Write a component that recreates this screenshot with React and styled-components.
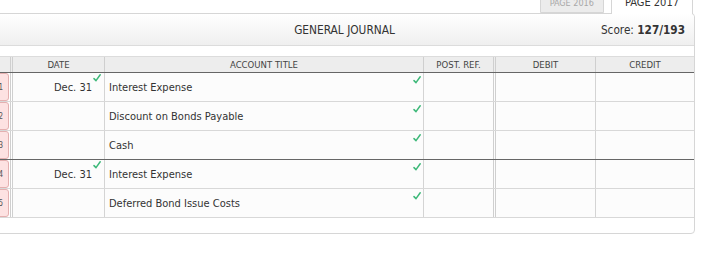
import React from "react";
import styled, { createGlobalStyle } from "styled-components";

const Global = createGlobalStyle`
  html, body { margin: 0; padding: 0; background: #fff; }
  body {
    font-family: "DejaVu Sans Condensed", "Liberation Sans", sans-serif;
    color: #333;
    overflow: hidden;
  }
  * { box-sizing: border-box; }
`;

const Page = styled.div`
  width: 708px;
  height: 253px;
  overflow: hidden;
`;

const Tabs = styled.div`
  display: flex;
  justify-content: flex-end;
  align-items: flex-end;
  gap: 7px;
  padding-right: 15px;
  margin-top: -8px;
  height: 21px;
  position: relative;
  z-index: 2;
`;

const Tab = styled.div`
  display: flex;
  align-items: flex-end;
  justify-content: center;
  height: ${p => (p.$active ? 22 : 20)}px;
  margin-bottom: ${p => (p.$active ? -1 : 0)}px;
  padding: 0 ${p => (p.$active ? 13 : 9)}px ${p => (p.$active ? 6 : 4)}px;
  border: 1px solid #d6d6d6;
  border-bottom: ${p => (p.$active ? "none" : "1px solid #d6d6d6")};
  border-radius: 3px 3px 0 0;
  background: ${p => (p.$active ? "#fff" : "#ececec")};
  color: ${p => (p.$active ? "#333" : "#a8a8a8")};
  font-size: ${p => (p.$active ? 11 : 9)}px;
  line-height: 1;
  text-transform: uppercase;
`;

const Panel = styled.div`
  margin-left: -6px;
  width: 701px;
  border: 1px solid #d6d6d6;
  border-radius: 0 4px 4px 0;
  background: #fff;
  padding-bottom: 15px;
`;

const Header = styled.div`
  display: grid;
  grid-template-columns: 1fr auto 1fr;
  align-items: center;
  height: 32px;
  border-bottom: 1px solid #dcdcdc;
  background: linear-gradient(#ffffff, #efefef);
  border-radius: 0 4px 0 0;
  margin-bottom: 10px;
`;

const Title = styled.div`
  grid-column: 2;
  font-size: 11.8px;
  color: #333;
  text-transform: uppercase;
`;

const Score = styled.div`
  grid-column: 3;
  justify-self: end;
  padding-right: 9px;
  font-size: 11.7px;
  color: #333;
  b { font-weight: 700; }
`;

const COLS = "18px 92px 319px 72px 100px 98px";

const HeadRow = styled.div`
  display: grid;
  grid-template-columns: ${COLS};
  height: 17px;
  border-top: 1px solid #dcdcdc;
  border-bottom: 1px solid #666;
  background: #ededed;
`;

const HeadCell = styled.div`
  display: flex;
  align-items: center;
  justify-content: center;
  font-size: 9.5px;
  color: #444;
  text-transform: uppercase;
  border-right: ${p =>
    p.$edge === "double" ? "3px double #cfcfcf" : p.$edge === "none" ? "none" : "1px solid #cfcfcf"};
`;

const Row = styled.div`
  display: grid;
  grid-template-columns: ${COLS};
  height: 29px;
  border-bottom: 1px solid ${p => (p.$dark ? "#666" : "#d8d8d8")};
  background: #fcfcfc;
`;

const Cell = styled.div`
  position: relative;
  display: flex;
  align-items: center;
  justify-content: ${p => (p.$right ? "flex-end" : "flex-start")};
  padding: ${p => (p.$right ? "0 12px 0 4px" : "0 4px")};
  font-size: 11px;
  color: #333;
  white-space: nowrap;
  border-right: ${p =>
    p.$edge === "double" ? "3px double #cfcfcf" : p.$edge === "none" ? "none" : "1px solid #d4d4d4"};
`;

const NumCell = styled.div`
  display: flex;
  border-right: 3px double #cfcfcf;
  background: #fff;
`;

const NumBox = styled.div`
  flex: 1;
  display: flex;
  align-items: center;
  justify-content: flex-end;
  padding-right: 5px;
  margin: 0 1px 0 0;
  background: #fde2e2;
  border: 1px solid #e4b0b0;
  border-radius: 3px;
  font-size: 8px;
  color: #555;
`;

const CheckMark = styled.svg`
  position: absolute;
  top: ${p => p.$top}px;
  right: ${p => p.$right}px;
  width: 8px;
  height: 8px;
`;

const Check = ({ top = 2, right = 2 }) => (
  <CheckMark $top={top} $right={right} viewBox="0 0 8 8">
    <path d="M1 4.6 L3 6.6 L7.2 0.8" fill="none" stroke="#3cb878" strokeWidth="1.5" strokeLinecap="round" strokeLinejoin="round" />
  </CheckMark>
);

const rows = [
  { n: 1, date: "Dec. 31", title: "Interest Expense" },
  { n: 2, date: "", title: "Discount on Bonds Payable" },
  { n: 3, date: "", title: "Cash", dark: true },
  { n: 4, date: "Dec. 31", title: "Interest Expense" },
  { n: 5, date: "", title: "Deferred Bond Issue Costs" },
];

export default function App() {
  return (
    <Page>
      <Global />
      <Tabs>
        <Tab>Page 2016</Tab>
        <Tab $active>Page 2017</Tab>
      </Tabs>
      <Panel>
        <Header>
          <Title>General Journal</Title>
          <Score>
            Score: <b>127/193</b>
          </Score>
        </Header>
        <HeadRow>
          <HeadCell $edge="double" />
          <HeadCell>Date</HeadCell>
          <HeadCell>Account Title</HeadCell>
          <HeadCell $edge="double">Post. Ref.</HeadCell>
          <HeadCell>Debit</HeadCell>
          <HeadCell $edge="none">Credit</HeadCell>
        </HeadRow>
        {rows.map(r => (
          <Row key={r.n} $dark={r.dark}>
            <NumCell>
              <NumBox>{r.n}</NumBox>
            </NumCell>
            <Cell $right>
              {r.date}
              {r.date && <Check top={1} right={3} />}
            </Cell>
            <Cell>
              {r.title}
              <Check top={3} right={2} />
            </Cell>
            <Cell $edge="double" />
            <Cell />
            <Cell $edge="none" />
          </Row>
        ))}
      </Panel>
    </Page>
  );
}
